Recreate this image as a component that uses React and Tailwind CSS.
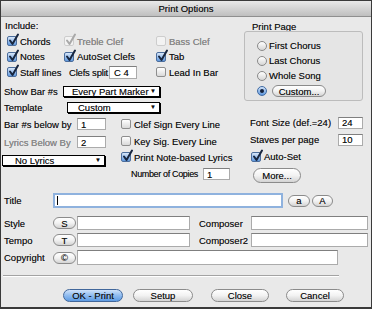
import React from 'react';

function CheckMark({ color }) {
  return (
    <svg className="absolute left-[0px] top-[-3px] overflow-visible" width="11" height="12" viewBox="0 0 11 12">
      <path d="M2 6.5 L4.5 10 L10 0.5" fill="none" stroke={color} strokeWidth="2" strokeLinecap="round" strokeLinejoin="round" />
    </svg>
  );
}

function Box({ checked, disabled }) {
  if (disabled) {
    return (
      <span className="relative w-[10px] h-[10px] shrink-0 rounded-[2px] border border-[#cdcdcd] bg-[#f3f3f3]">
        {checked && <CheckMark color="#a9a9a9" />}
      </span>
    );
  }
  if (checked) {
    return (
      <span className="relative w-[10px] h-[10px] shrink-0 rounded-[2px] border border-[#4b6d9c] bg-linear-to-b from-[#d8e7f9] to-[#5f98de]">
        <CheckMark color="#18263f" />
      </span>
    );
  }
  return <span className="relative w-[10px] h-[10px] shrink-0 rounded-[2px] border border-[#8e8e8e] bg-linear-to-b from-white to-[#d9d9d9]" />;
}

function Check({ label, checked, disabled, dim, className = '' }) {
  return (
    <div className={`flex items-center gap-[3px] ${className}`}>
      <Box checked={checked} disabled={disabled} />
      <span className={dim ? 'text-[#8d8d8d]' : ''}>{label}</span>
    </div>
  );
}

function Radio({ label, selected, children }) {
  return (
    <div className="flex items-center gap-[2px]">
      {selected ? (
        <span className="w-[10px] h-[10px] shrink-0 rounded-full border border-[#3f6aa3] bg-linear-to-b from-[#d2e3f8] to-[#5d96dc] flex items-center justify-center">
          <span className="w-[4px] h-[4px] rounded-full bg-[#14213a]" />
        </span>
      ) : (
        <span className="w-[10px] h-[10px] shrink-0 rounded-full border border-[#8a8a8a] bg-linear-to-b from-white to-[#d6d6d6]" />
      )}
      {label && <span>{label}</span>}
      {children}
    </div>
  );
}

function Pill({ children, className = '' }) {
  return (
    <div className={`flex items-center justify-center rounded-full border border-[#8b8b8b] bg-linear-to-b from-white via-[#f2f2f2] to-[#d4d4d4] ${className}`}>
      {children}
    </div>
  );
}

function Field({ value, className = '' }) {
  return (
    <div className={`flex items-center bg-white border border-[#ababab] border-t-[#7f7f7f] pl-[3px] ${className}`}>
      {value}
    </div>
  );
}

function Popup({ value, className = '' }) {
  return (
    <div className={`flex items-center justify-between bg-white border border-black shadow-[1px_1px_0_#000] pl-[8px] pr-[3px] ${className}`}>
      <span>{value}</span>
      <span className="text-[6px]">▼</span>
    </div>
  );
}

export default function App() {
  return (
    <div className="w-[372px] h-[309px] overflow-hidden whitespace-nowrap bg-[#e9e9e9] border border-[#3a3a3a] border-b-2 font-['Liberation_Sans',Arial,sans-serif] text-[9.5px] leading-[11px] text-[#111] [text-shadow:0_0_0.3px_rgba(0,0,0,0.5)]">
      {/* title bar */}
      <div className="h-[16px] flex items-center justify-center bg-linear-to-b from-[#e9e9e9] to-[#bfbfbf] border-b border-[#8f8f8f]">
        Print Options
      </div>

      <div className="flex">
        {/* left column */}
        <div className="w-[242px] flex flex-col">
          <div className="h-[16px] flex items-center pl-[4px]">Include:</div>

          <div className="h-[16px] flex items-center pl-[6px]">
            <Check className="w-[57px]" label="Chords" checked />
            <Check className="w-[92px]" label="Treble Clef" checked disabled dim />
            <Check label="Bass Clef" disabled dim />
          </div>
          <div className="h-[15px] flex items-center pl-[6px]">
            <Check className="w-[57px]" label="Notes" checked />
            <Check className="w-[92px]" label="AutoSet Clefs" checked />
            <Check label="Tab" checked />
          </div>
          <div className="h-[16px] flex items-center pl-[6px]">
            <Check className="w-[57px]" label="Staff lines" checked />
            <div className="w-[92px] flex items-center pl-[5px]">
              <span className="w-[40px] tracking-[-0.2px]">Clefs split</span>
              <Field className="w-[28px] h-[13px] pl-[4px]" value="C 4" />
            </div>
            <Check label="Lead In Bar" />
          </div>

          <div className="mt-[5px] h-[12px] flex items-center pl-[3px]">
            <span className="w-[59px]">Show Bar #s</span>
            <Popup className="w-[97px] h-[11px]" value="Every Part Marker" />
          </div>
          <div className="mt-[4px] h-[12px] flex items-center pl-[3px]">
            <span className="w-[63px]">Template</span>
            <Popup className="w-[93px] h-[11px] pl-[10px]" value="Custom" />
          </div>

          <div className="flex">
            <div className="w-[120px] flex flex-col">
              <div className="mt-[5px] h-[12px] flex items-center pl-[3px]">
                <span className="w-[73px]">Bar #s below by</span>
                <Field className="w-[29px] h-[12px]" value="1" />
              </div>
              <div className="mt-[6px] h-[12px] flex items-center pl-[3px]">
                <span className="w-[73px] text-[#8d8d8d]">Lyrics Below By</span>
                <Field className="w-[29px] h-[12px]" value="2" />
              </div>
              <div className="mt-[7px] h-[11px] flex pl-[1px]">
                <Popup className="w-[103px] h-[11px] pl-[12px]" value="No Lyrics" />
              </div>
            </div>
            <div className="flex-1 flex flex-col">
              <Check className="mt-[5px] h-[12px]" label="Clef Sign Every Line" />
              <Check className="mt-[5px] h-[12px]" label="Key Sig. Every Line" />
              <Check className="mt-[4px] h-[12px]" label="Print Note-based Lyrics" checked />
              <div className="mt-[5px] h-[12px] flex items-center pl-[10px]">
                <span className="w-[72px] text-[9px] tracking-[-0.35px]">Number of Copies</span>
                <Field className="w-[27px] h-[12px]" value="1" />
              </div>
            </div>
          </div>
        </div>

        {/* right column */}
        <div className="w-[121px] flex flex-col">
          <div className="mt-[4px] h-[10px] flex items-center pl-[9px]">Print Page</div>
          <div className="ml-[1px] w-[119px] h-[70px] rounded-[3px] border border-[#bcbcbc] bg-[#e5e5e5] pt-[6px] pl-[12px] flex flex-col">
            <div className="h-[15px] flex items-center"><Radio label="First Chorus" /></div>
            <div className="h-[15px] flex items-center"><Radio label="Last Chorus" /></div>
            <div className="h-[15px] flex items-center"><Radio label="Whole Song" /></div>
            <div className="h-[16px] flex items-center">
              <Radio selected>
                <Pill className="ml-[3px] w-[54px] h-[12px]">Custom...</Pill>
              </Radio>
            </div>
          </div>
          <div className="mt-[15px] h-[13px] flex items-center pl-[7px]">
            <span className="w-[88px]">Font Size (def.=24)</span>
            <Field className="w-[25px] h-[12px]" value="24" />
          </div>
          <div className="mt-[4px] h-[13px] flex items-center pl-[7px]">
            <span className="w-[88px]">Staves per page</span>
            <Field className="w-[25px] h-[12px]" value="10" />
          </div>
          <Check className="mt-[4px] h-[13px] pl-[8px]" label="Auto-Set" checked />
          <Pill className="mt-[5px] ml-[10px] w-[48px] h-[15px]">More...</Pill>
        </div>
      </div>

      {/* bottom fields */}
      <div className="mt-[10px] h-[15px] flex items-center pl-[3px]">
        <span className="w-[49px]">Title</span>
        <div className="w-[230px] h-[15px] bg-white border-2 border-[#8fb2de] flex items-center pl-[2px]">
          <span className="w-[1px] h-[9px] bg-black" />
        </div>
        <Pill className="ml-[5px] w-[22px] h-[12px]">a</Pill>
        <Pill className="ml-[2px] w-[21px] h-[12px]">A</Pill>
      </div>
      <div className="mt-[8px] h-[14px] flex items-center pl-[3px]">
        <span className="w-[49px]">Style</span>
        <Pill className="w-[23px] h-[12px]">S</Pill>
        <Field className="ml-[1px] w-[113px] h-[14px]" />
        <span className="ml-[9px] w-[52px]">Composer</span>
        <Field className="w-[117px] h-[14px]" />
      </div>
      <div className="mt-[3px] h-[14px] flex items-center pl-[3px]">
        <span className="w-[49px]">Tempo</span>
        <Pill className="w-[23px] h-[12px]">T</Pill>
        <Field className="ml-[1px] w-[113px] h-[14px]" />
        <span className="ml-[9px] w-[52px]">Composer2</span>
        <Field className="w-[117px] h-[14px]" />
      </div>
      <div className="mt-[3px] h-[15px] flex items-center pl-[3px]">
        <span className="w-[49px]">Copyright</span>
        <Pill className="w-[23px] h-[12px]">©</Pill>
        <Field className="ml-[1px] w-[261px] h-[15px]" />
      </div>

      <div className="mt-[10px] ml-[2px] w-[336px] h-[2px] border-t border-[#a3a3a3] border-b border-b-white" />

      <div className="mt-[12px] h-[13px] flex items-center">
        <div className="ml-[62px] w-[60px] h-[13px] flex items-center justify-center rounded-full border border-[#41679b] bg-linear-to-b from-[#cfe2f9] via-[#8fbbef] to-[#5d9be3]">
          OK - Print
        </div>
        <Pill className="ml-[10px] w-[60px] h-[13px]">Setup</Pill>
        <Pill className="ml-[18px] w-[58px] h-[13px]">Close</Pill>
        <Pill className="ml-[17px] w-[58px] h-[13px]">Cancel</Pill>
      </div>
    </div>
  );
}
